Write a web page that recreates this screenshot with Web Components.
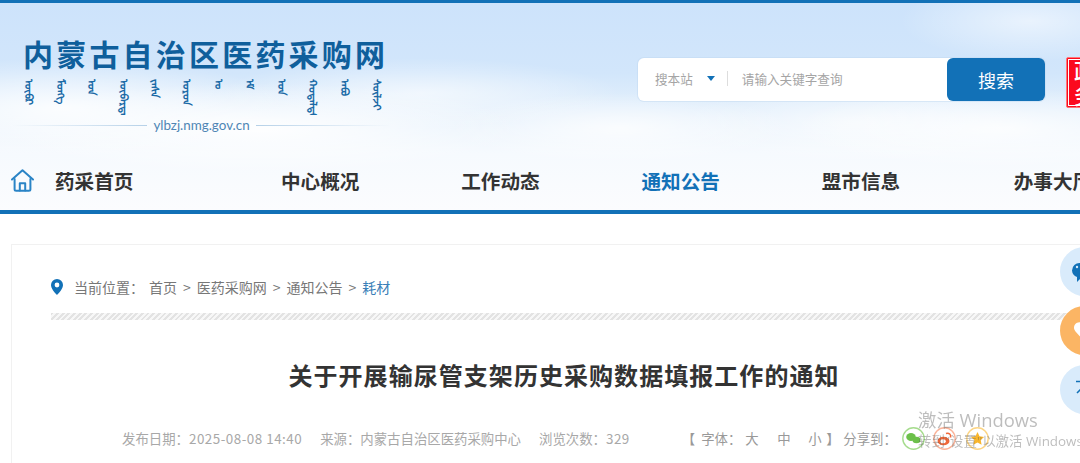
<!DOCTYPE html>
<html lang="zh"><head><meta charset="utf-8">
<style>
html,body{margin:0;padding:0;height:463px;overflow:hidden;background:#fff;font-family:"Noto Sans CJK SC","Noto Sans",sans-serif}
</style></head><body>
<site-top>
<site-logo></site-logo>
<site-search></site-search>
<main-nav slot="nav"></main-nav>
</site-top>
<article-card></article-card>
<side-dock></side-dock>
<activation-mark></activation-mark>
<script>
function def(name,html){customElements.define(name,class extends HTMLElement{constructor(){super();this.attachShadow({mode:'open'}).innerHTML=html;}});}
def('site-top',`<style>
:host{display:block;width:1080px;height:214px;box-sizing:border-box;border-top:3px solid #1271b7;border-bottom:4px solid #1271b7;
background:
radial-gradient(ellipse 130px 40px at 1030px 18px,rgba(255,255,255,.55),transparent),
radial-gradient(ellipse 230px 50px at 60px 105px,rgba(255,255,255,.85),transparent),
radial-gradient(ellipse 260px 45px at 260px 125px,rgba(255,255,255,.95),transparent),
radial-gradient(ellipse 200px 35px at 420px 90px,rgba(255,255,255,.6),transparent),
radial-gradient(ellipse 170px 35px at 620px 125px,rgba(255,255,255,.75),transparent),
radial-gradient(ellipse 210px 40px at 1000px 125px,rgba(255,255,255,.8),transparent),
radial-gradient(ellipse 180px 40px at 860px 120px,rgba(255,255,255,.6),transparent),
linear-gradient(180deg,#cde3fb 0,#d2e6fb 70px,#e6f1fc 110px,#f6fafe 150px,#fbfcfe 207px)}
.row{display:flex;height:157px;padding-left:24px;box-sizing:border-box}
</style><div class="row"><slot></slot></div><slot name="nav"></slot>`);
def('site-logo',`<style>
:host{display:block;width:362px;padding-top:34px;flex:none;margin-right:252px}
.cn{font-size:30px;line-height:32px;font-weight:700;color:#0f5f9c;letter-spacing:3.2px;white-space:nowrap;margin-left:-1px}
.mn{display:flex;height:36px;margin:10px 0 0 0;overflow:hidden;font-family:"Noto Sans Mongolian","Noto Sans",sans-serif;font-size:11px;font-weight:700;color:#1a6aa6}
.mn span{writing-mode:vertical-lr;width:31.6px;flex:none;line-height:14px;white-space:nowrap}
.url{display:flex;align-items:center;gap:6px;margin:0 -5px 0 -12px;font:13.4px/20px Lato,"Noto Sans",sans-serif;color:#4f86b5}
.url i{flex:1;height:1px;background:linear-gradient(90deg,transparent,#b6d1e8)}
.url i+span+i{background:linear-gradient(270deg,transparent,#b6d1e8)}
</style><div class="cn">内蒙古自治区医药采购网</div>
<div class="mn"><span>ᠥᠪᠷ</span><span>ᠮᠣᠩᠭ</span><span>ᠤᠨ</span><span>ᠥᠪᠡᠷᠲᠡᠭᠡᠨ</span><span>ᠵᠠᠰᠠ</span><span>ᠣᠷᠣᠨ</span><span>ᠤ</span><span>ᠡᠮ</span><span>ᠤᠨ</span><span>ᠬᠤᠳᠠᠯᠳᠤ</span><span>ᠠᠪᠤ</span><span>ᠰᠦᠯᠵᠢ</span></div>
<div class="url"><i></i><span>ylbzj.nmg.gov.cn</span><i></i></div>`);
def('site-search',`<style>
:host{display:flex;flex:none;margin-top:55px;height:51px}
.box{display:flex;width:407px;height:43px;background:#fff;border-radius:6px;align-items:center;font-size:12.6px;color:#a5a5a5;box-sizing:border-box;padding-left:17px;box-shadow:0 0 0 1px rgba(190,215,240,.45)}
.t{margin-bottom:2px}
.tri{width:0;height:0;border:4px solid transparent;border-top:5px solid #1271b7;border-bottom:0;margin:0 12px 2px 14px}
.sep{width:1px;height:15px;background:#ddd;margin:0 14px 2px 0}
.ph{flex:1}
.btn{width:98px;height:43px;background:#1271b7;color:#fff;font-size:18px;border-radius:6px;display:flex;align-items:center;justify-content:center}
.stamp{margin:-1px 0 0 21px;width:50px;height:51px;box-sizing:border-box;background:#fb0a1e;border:1px solid #f77;outline:1px solid #fff;outline-offset:-3px;border-radius:2px;color:#fff;font:500 23px/24px "Noto Sans CJK SC",sans-serif;overflow:hidden;padding:0 0 0 7px}
</style><div class="box"><span class="t">搜本站</span><i class="tri"></i><i class="sep"></i><span class="ph t">请输入关键字查询</span><div class="btn">搜索</div></div><div class="stamp">政<br>务</div>`);
def('main-nav',`<style>
:host{display:block;height:50px;width:1200px}
ul{display:flex;list-style:none;margin:0;padding:0 0 9px 11px;box-sizing:border-box;height:50px;align-items:center;font-size:19.6px;font-weight:700;color:#333;white-space:nowrap}
svg{display:block;margin-right:21px}
li{width:80px}
li+li{margin-left:100.25px}
li.first{margin-right:46px}
.on{color:#1271b7}
li.last{margin-left:112px}
</style><ul><svg width="23" height="23" viewBox="0 0 23 23" fill="none" stroke="#2a84c6" stroke-width="2" stroke-linecap="round" stroke-linejoin="round"><path d="M1 10.500 11.500 1.200 22 10.500"/><path d="M3.600 10v10.200a1.500 1.500 0 0 0 1.500 1.500h12.800a1.500 1.500 0 0 0 1.500-1.500V10"/><path d="M8.800 21.500v-7.200h5.400v7.200"/></svg>
<li class="first">药采首页</li><li style="margin-left:100px">中心概况</li><li>工作动态</li><li class="on">通知公告</li><li>盟市信息</li><li class="last">办事大厅</li></ul>`);
def('crumb-bar',`<style>
:host{display:flex;align-items:center;height:18px;font-size:14px;color:#777;white-space:nowrap}
svg{margin-right:11px;flex:none}
b{font-weight:400;margin-right:5px}
span{margin-right:6px}
.cur{color:#3a7fb8}
</style><svg width="12" height="16" viewBox="0 0 12 16"><path fill="#1271b7" fill-rule="evenodd" d="M6 0a6 6 0 0 1 6 6c0 3.600-3.600 7.600-6 10C3.600 13.600 0 9.600 0 6a6 6 0 0 1 6-6Zm0 3.600a2.400 2.400 0 1 0 0 4.800 2.400 2.400 0 0 0 0-4.800Z"/></svg>
<b>当前位置：</b><span>首页</span><span>&gt;</span><span>医药采购网</span><span>&gt;</span><span>通知公告</span><span>&gt;</span><span class="cur">耗材</span>`);
def('article-meta',`<style>
:host{display:flex;align-items:center;height:24px;font-size:13.4px;color:#a8a8a8;white-space:nowrap;padding-left:110px}
.a{margin-right:18px}
.n{letter-spacing:.5px}
.tools{margin-left:52px;display:flex;align-items:center;color:#999}
svg{display:block;margin:1px 0 0 8.3px}
svg:first-of-type{margin-left:5px}
</style><span class="a">发布日期：<span class="n">2025-08-08 14:40</span></span><span class="a">来源：内蒙古自治区医药采购中心</span><span>浏览次数：<span class="n">329</span></span>
<div class="tools"><span>【</span><span style="margin-left:6px">字体：</span><span style="margin-left:4px">大</span><span style="margin-left:18.600px">中</span><span style="margin-left:17.600px">小</span><span style="margin:0 3.600px 0 4.600px">】</span><span>分享到：</span>
<svg width="23" height="23" viewBox="0 0 23 23"><circle cx="11.500" cy="11.500" r="10.700" fill="#fff" stroke="#a6dc8e" stroke-width="1.400"/><ellipse cx="9" cy="10" rx="4.800" ry="4" fill="#6cc04a"/><ellipse cx="14.500" cy="13" rx="4" ry="3.300" fill="#6cc04a"/></svg>
<svg width="23" height="23" viewBox="0 0 23 23"><circle cx="11.500" cy="11.500" r="10.700" fill="#fff" stroke="#fbb49a" stroke-width="1.400"/><ellipse cx="10.500" cy="14" rx="6" ry="4.300" fill="#f0693a"/><ellipse cx="10" cy="14.300" rx="2.800" ry="2" fill="#fff"/><path d="M13 6.500c3-1 5.500 1 4.500 4" fill="none" stroke="#f0693a" stroke-width="1.600"/></svg>
<svg width="23" height="23" viewBox="0 0 23 23" style="margin-left:10px"><circle cx="11.500" cy="11.500" r="10.700" fill="#fff" stroke="#fcd585" stroke-width="1.400"/><path d="M11.500 5l2 4.300 4.600.6-3.400 3.200.9 4.600-4.100-2.300-4.100 2.300.9-4.600-3.400-3.200 4.600-.6Z" fill="#f9b62c"/></svg></div>`);
def('article-card',`<style>
:host{display:block;box-sizing:border-box;width:1106px;height:240px;margin:30px 0 0 11px;padding:33px 39px 0;border:1px solid #f1f1f1;background:#fff}
.hatch{height:7px;margin-top:17px;background:repeating-linear-gradient(135deg,#e3e3e3 0 2px,#f7f7f7 2px 4px)}
h1{margin:38px 0 0;font-size:24px;line-height:34px;letter-spacing:1.05px;font-weight:700;color:#333;text-align:center}
article-meta{margin:34px 0 0 -39px}
</style><crumb-bar></crumb-bar><div class="hatch"></div><h1>关于开展输尿管支架历史采购数据填报工作的通知</h1><article-meta></article-meta>`);
def('side-dock',`<style>
:host{position:fixed;left:1060px;top:247px;display:grid;gap:10px}
div{width:49px;height:49px;border-radius:50%;background:#d9ebfb;display:flex}
.o{background:#fbb564}
svg{display:block;margin:auto}
</style><div><svg width="49" height="49" viewBox="0 0 49 49"><path fill="#1271b7" d="M20 16h12a7.500 7.500 0 0 1 0 15H21l-4 4 0-5A7.500 7.500 0 0 1 12 23.500 7.500 7.500 0 0 1 20 16Z"/><circle cx="17" cy="20" r="1.200" fill="#d9ebfb"/></svg></div>
<div class="o"><svg width="49" height="49" viewBox="0 0 49 49"><path fill="#fff" d="M24.500 35.500 15.500 25.500c-4.500-5.500 2-12.500 9-7.500 7-5 13.500 2 9 7.500Z"/></svg></div>
<div><svg width="49" height="49" viewBox="0 0 49 49" fill="none" stroke="#1271b7" stroke-width="1.600"><path d="M16 16.500h18M25 20l-8 8M25 20l8 8M25 20v12"/></svg></div>`);
def('activation-mark',`<style>
:host{position:fixed;left:918px;top:408px;width:220px;color:rgba(90,90,90,.4);font-family:"Open Sans","Noto Sans CJK SC",sans-serif;white-space:nowrap;pointer-events:none}
.a{font-size:18.4px;line-height:24px}
.b{font-size:13.4px;line-height:20px;margin-top:-1px}
</style><div class="a">激活 Windows</div><div class="b">转到"设置"以激活 Windows。</div>`);
</script></body></html>
